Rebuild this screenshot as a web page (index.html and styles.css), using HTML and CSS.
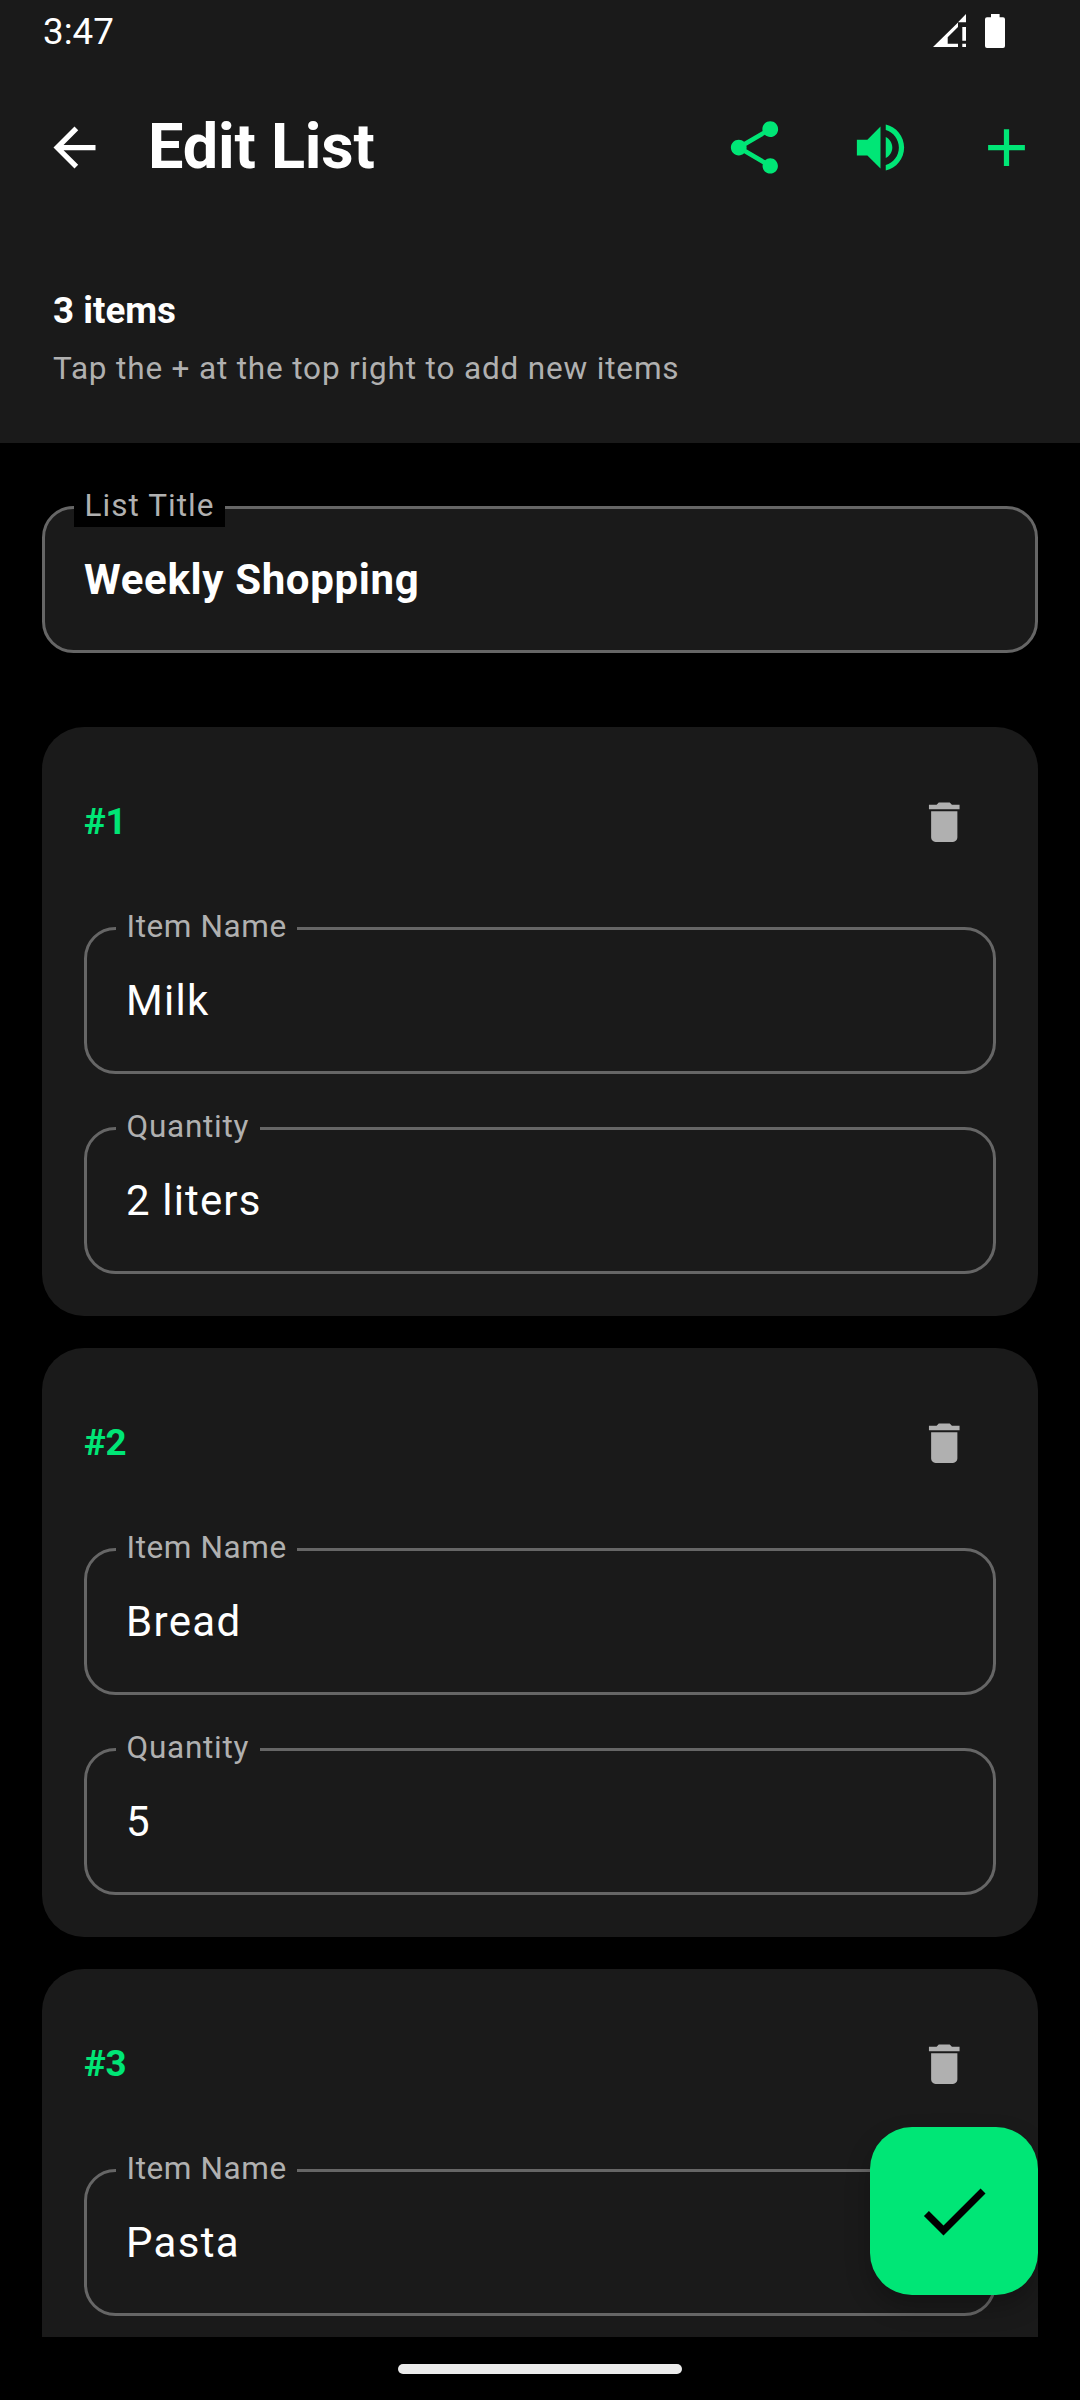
FILE: index.html
```html
<!DOCTYPE html>
<html lang="en">
<head>
<meta charset="utf-8">
<title>Edit List</title>
<link rel="stylesheet" href="styles.css">
</head>
<body>
<div class="screen">
  <header class="header">
    <div class="status">
      <span class="clock">3:47</span>
      <svg class="status-icons" width="72" height="34" viewBox="0 0 72 34" fill="#fff">
        <path d="M33 0v8.3h-8zM25 8.5V13L14.7 23.3v6.4H25V33H0z"/>
        <path d="M29.3 13H33v13.7h-3.7zM29.3 29.7H33V33h-3.7z"/>
        <path d="M58 0h8.6v3.2H70a2 2 0 0 1 2 2V32a2 2 0 0 1-2 2H54a2 2 0 0 1-2-2V5.2a2 2 0 0 1 2-2h4z"/>
      </svg>
    </div>
    <div class="appbar">
      <button class="icon-btn back" aria-label="Back"><svg class="icon" viewBox="0 0 24 24"><path d="M20 11H7.83l5.59-5.59L12 4l-8 8 8 8 1.41-1.41L7.83 13H20z"/></svg></button>
      <h1 class="title">Edit List</h1>
      <button class="icon-btn" aria-label="Share"><svg class="icon" viewBox="0 0 24 24"><path d="M18 16.08c-.76 0-1.44.3-1.96.77L8.91 12.7c.05-.23.09-.46.09-.7s-.04-.47-.09-.7l7.05-4.11c.54.5 1.25.81 2.04.81 1.66 0 3-1.34 3-3s-1.34-3-3-3-3 1.34-3 3c0 .24.04.47.09.7L8.04 9.81C7.5 9.31 6.79 9 6 9c-1.66 0-3 1.34-3 3s1.34 3 3 3c.79 0 1.5-.31 2.04-.81l7.12 4.16c-.05.21-.08.43-.08.65 0 1.61 1.31 2.92 2.92 2.92s2.92-1.31 2.92-2.92-1.31-2.92-2.92-2.92z"/></svg></button>
      <button class="icon-btn" aria-label="Read aloud"><svg class="icon" viewBox="0 0 24 24"><path d="M3 9v6h4l5 5V4L7 9H3zm13.5 3c0-1.77-1.02-3.29-2.5-4.03v8.05c1.48-.73 2.5-2.25 2.5-4.02zM14 3.23v2.06c2.89.86 5 3.54 5 6.71s-2.11 5.85-5 6.71v2.06c4.01-.91 7-4.49 7-8.77s-2.99-7.86-7-8.77z"/></svg></button>
      <button class="icon-btn" aria-label="Add"><svg class="icon" viewBox="0 0 24 24"><path d="M19 13h-6v6h-2v-6H5v-2h6V5h2v6h6v2z"/></svg></button>
    </div>
    <div class="summary">
      <div class="count">3 items</div>
      <div class="hint">Tap the + at the top right to add new items</div>
    </div>
  </header>

  <main class="content">
    <div class="field list-title"><span class="label">List Title</span><span class="value">Weekly Shopping</span></div>

    <section class="card">
      <div class="card-head"><span class="number">#1</span><svg class="trash" viewBox="0 0 24 24"><path d="M6 19c0 1.1.9 2 2 2h8c1.1 0 2-.9 2-2V7H6v12zM19 4h-3.5l-1-1h-5l-1 1H5v2h14V4z"/></svg></div>
      <div class="field name"><span class="label">Item Name</span><span class="value">Milk</span></div>
      <div class="field quantity"><span class="label">Quantity</span><span class="value">2 liters</span></div>
    </section>

    <section class="card">
      <div class="card-head"><span class="number">#2</span><svg class="trash" viewBox="0 0 24 24"><path d="M6 19c0 1.1.9 2 2 2h8c1.1 0 2-.9 2-2V7H6v12zM19 4h-3.5l-1-1h-5l-1 1H5v2h14V4z"/></svg></div>
      <div class="field name"><span class="label">Item Name</span><span class="value">Bread</span></div>
      <div class="field quantity"><span class="label">Quantity</span><span class="value">5</span></div>
    </section>

    <section class="card">
      <div class="card-head"><span class="number">#3</span><svg class="trash" viewBox="0 0 24 24"><path d="M6 19c0 1.1.9 2 2 2h8c1.1 0 2-.9 2-2V7H6v12zM19 4h-3.5l-1-1h-5l-1 1H5v2h14V4z"/></svg></div>
      <div class="field name"><span class="label">Item Name</span><span class="value">Pasta</span></div>
    </section>

    <button class="fab" aria-label="Save"><svg class="check" viewBox="0 0 24 24"><path d="M9 16.17L4.83 12l-1.42 1.41L9 19 21 7l-1.41-1.41z"/></svg></button>
  </main>

  <footer class="nav"><div class="pill"></div></footer>
</div>
</body>
</html>
```
FILE: styles.css
```css
* { box-sizing: border-box; }

body {
  margin: 0;
  background: #000;
  color: #fff;
  font-family: Roboto, "Liberation Sans", sans-serif;
}

.screen {
  display: flex;
  flex-direction: column;
  width: 1080px;
  height: 2400px;
  overflow: hidden;
}

.header {
  flex: none;
  height: 443px;
  background: #1a1a1a;
}

.status {
  display: flex;
  justify-content: space-between;
  height: 63px;
  padding: 10px 75px 0 43px;
}

.clock {
  font-size: 36.75px;
  line-height: 43px;
}

.status-icons { margin-top: 4px; }

.appbar {
  display: flex;
  align-items: center;
  height: 169px;
  padding: 0 10.5px 0 11.5px;
}

.icon-btn {
  display: grid;
  place-items: center;
  width: 126px;
  height: 126px;
  padding: 0;
  border: 0;
  background: none;
  color: #00e676;
}

.back { color: #fff; }

.icon {
  width: 63px;
  height: 63px;
  fill: currentColor;
}

.title {
  flex: 1;
  margin: 0;
  padding: 0 0 2px 10.5px;
  font-size: 63px;
  font-weight: 700;
  line-height: 84px;
  letter-spacing: -0.2px;
}

.summary { padding: 53px 53px 0; }

.count {
  font-size: 36.75px;
  font-weight: 700;
  line-height: 52px;
}

.hint {
  margin-top: 11px;
  color: #b0b0b0;
  font-size: 31.5px;
  line-height: 42px;
  letter-spacing: 0.84px;
}

.content {
  position: relative;
  flex: 1;
  min-height: 0;
  padding: 63px 42px 0;
  overflow: hidden;
}

.field {
  position: relative;
  height: 147px;
  padding: 39px;
  border: 3px solid #666;
  border-radius: 31.5px;
  background: #1a1a1a;
}

.value {
  display: block;
  font-size: 42px;
  line-height: 63px;
  letter-spacing: 1.3125px;
}

/* Floating label sits on the top edge of the outline */
.label {
  position: absolute;
  top: -24px;
  left: 29px;
  padding: 0 10.5px;
  background: #1a1a1a;
  color: #b0b0b0;
  font-size: 31.5px;
  line-height: 42px;
  letter-spacing: 1.05px;
}

.name .label { letter-spacing: 0.58px; }
.quantity .label { letter-spacing: 0.75px; }
.quantity .value { letter-spacing: 1.15px; }

.list-title { margin-bottom: 74px; }
.list-title .label { background: #000; }

.list-title .value {
  font-weight: 700;
  letter-spacing: 0.65px;
}

.card {
  height: 589px;
  margin-bottom: 32px;
  padding: 42px;
  border-radius: 42px;
  background: #1a1a1a;
}

.card-head {
  display: flex;
  align-items: center;
  justify-content: space-between;
  height: 107px;
  margin-bottom: 51px;
  padding-right: 26px;
}

.number {
  padding-bottom: 2px;
  color: #00e676;
  font-size: 36.75px;
  font-weight: 700;
  line-height: 52px;
  letter-spacing: -0.3px;
}

.trash {
  width: 52.5px;
  height: 52.5px;
  fill: #b0b0b0;
}

.card .field + .field { margin-top: 53px; }

.fab {
  position: absolute;
  right: 42px;
  bottom: 42px;
  display: grid;
  place-items: center;
  width: 168px;
  height: 168px;
  padding: 0;
  border: 0;
  border-radius: 42px;
  background: #00e676;
  box-shadow: 0 12px 24px rgba(0, 0, 0, 0.25);
}

.check {
  width: 84px;
  height: 84px;
  fill: #000;
}

.nav {
  display: flex;
  flex: none;
  justify-content: center;
  height: 63px;
  padding-top: 27px;
}

.pill {
  width: 284px;
  height: 10px;
  border-radius: 5px;
  background: #ebebeb;
}
```
